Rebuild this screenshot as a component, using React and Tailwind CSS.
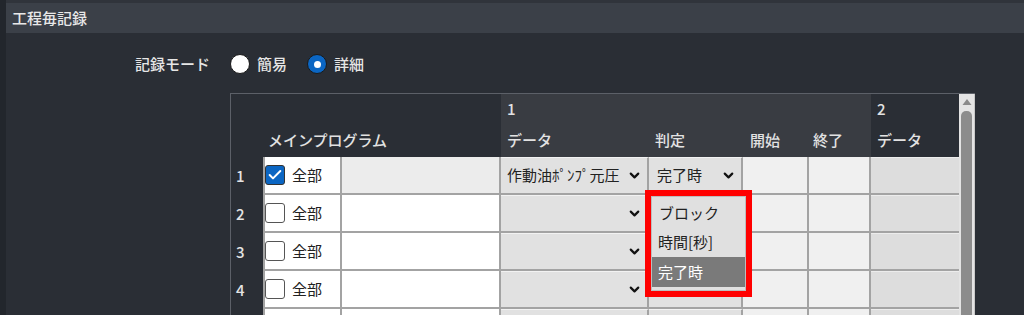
import React from 'react';
import { ChevronDown, Check } from 'lucide-react';

const font = { fontFamily: '"Noto Sans CJK JP", "Noto Sans", sans-serif' };

const Radio = ({ checked, label }) => (
  <div className="flex items-center gap-[7px]">
    {checked ? (
      <span className="w-[20px] h-[20px] rounded-full bg-[#0b66c3] border border-[#1a1a1a] flex items-center justify-center">
        <span className="w-[7px] h-[7px] rounded-full bg-white"></span>
      </span>
    ) : (
      <span className="w-[20px] h-[20px] rounded-full bg-white border border-[#1a1a1a]"></span>
    )}
    <span>{label}</span>
  </div>
);

const Box = ({ checked }) =>
  checked ? (
    <span className="w-[20px] h-[20px] rounded-[3px] bg-[#0b66c3] border border-[#333] flex items-center justify-center">
      <Check size={16} strokeWidth={3} className="text-white" />
    </span>
  ) : (
    <span className="w-[20px] h-[20px] rounded-[3px] bg-white border border-[#555]"></span>
  );

const Row = ({ n, first, blank }) => (
  <div className="flex h-[38px] shrink-0">
    <div className="w-[32px] flex items-center pl-[5px] text-[#e4e4e4] font-medium bg-[#2a2e35]">{blank ? '' : n}</div>
    <div className="w-[79px] flex items-center gap-[7px] bg-white border-l-2 border-b-2 border-r-2 border-[#a3a3a3]">
      {!blank && <Box checked={first} />}
      {!blank && <span className="text-[#222]">全部</span>}
    </div>
    <div className={`w-[159px] border-b-2 border-r-2 border-[#a3a3a3] ${first ? 'bg-[#ececec]' : 'bg-white'}`}></div>
    <div className="w-[148px] flex items-center justify-between pl-[6px] pr-[5px] bg-[#e1e1e1] border-t border-t-[#f2f2f2] border-b-2 border-r-2 border-[#a3a3a3] text-[#222]">
      <span>{first ? '作動油ﾎﾟﾝﾌﾟ元圧' : ''}</span>
      {!blank && <ChevronDown size={15} strokeWidth={3.5} className="text-[#111]" />}
    </div>
    <div className="w-[94px] flex items-center justify-between pl-[8px] pr-[5px] bg-[#e1e1e1] border-t border-t-[#f2f2f2] border-b-2 border-r-2 border-[#a3a3a3] text-[#222]">
      <span>{first ? '完了時' : ''}</span>
      {first && <ChevronDown size={15} strokeWidth={3.5} className="text-[#111]" />}
    </div>
    <div className="w-[66px] bg-[#f0f0f0] border-b-2 border-r-2 border-[#a3a3a3]"></div>
    <div className="w-[62px] bg-[#f0f0f0] border-b-2 border-r-2 border-[#a3a3a3]"></div>
    <div className="w-[88px] bg-[#dddddd] border-t border-t-[#ececec] border-b-2 border-[#a3a3a3]"></div>
  </div>
);

export default function App() {
  return (
    <div className="w-[1024px] h-[315px] overflow-hidden flex bg-[#2a2e35] text-[15px]" style={font}>
      <div className="w-[6px] shrink-0 bg-[#22262c]"></div>
      <div className="flex-1 flex flex-col">
        <div className="h-[33px] shrink-0 flex items-center px-[6px] bg-[#3b4048] text-[15px] font-medium text-[#e8e8e8] border-t-[3px] border-[#30343b]">
          工程毎記録
        </div>

        <div className="flex items-center h-[22px] shrink-0 mt-[20px] pl-[129px] text-[#e6e6e6] font-medium">
          <span className="mr-[20px]">記録モード</span>
          <div className="flex items-center gap-[20px]">
            <Radio label="簡易" />
            <Radio checked label="詳細" />
          </div>
        </div>

        <div className="relative shrink-0 ml-[224px] mt-[18px] flex w-[745px] border-t border-l border-[#5c6068]">
          <div className="flex flex-col w-[728px]">
            {/* header */}
            <div className="flex h-[63px] shrink-0 text-[#e2e2e2] font-medium">
              <div className="w-[270px] flex flex-col bg-[#2a2e35]">
                <div className="h-[30px]"></div>
                <div className="h-[33px] flex items-center pl-[37px]">メインプログラム</div>
              </div>
              <div className="w-[370px] flex flex-col bg-[#393c42]">
                <div className="h-[30px] flex items-center pl-[6px]">1</div>
                <div className="h-[33px] flex items-center">
                  <span className="w-[148px] pl-[6px]">データ</span>
                  <span className="w-[94px] pl-[6px]">判定</span>
                  <span className="w-[66px] pl-[7px]">開始</span>
                  <span className="w-[62px] pl-[4px]">終了</span>
                </div>
              </div>
              <div className="w-[88px] flex flex-col bg-[#2a2e35]">
                <div className="h-[30px] flex items-center pl-[6px]">2</div>
                <div className="h-[33px] flex items-center pl-[6px]">データ</div>
              </div>
            </div>
            <Row n="1" first />
            <Row n="2" />
            <Row n="3" />
            <Row n="4" />
            <Row n="5" blank />
          </div>

          {/* scrollbar */}
          <div className="w-[17px] flex flex-col items-center bg-[#e4e4e4] border-r border-[#c8c8c8]">
            <svg width="10" height="8" viewBox="0 0 10 8" className="mt-[4px]">
              <path d="M5 1 L9.5 7 L0.5 7 Z" fill="#8a8a8a" />
            </svg>
            <div className="mt-[5px] w-[11px] flex-1 rounded-t-[5px] bg-[#8c8c8c]"></div>
          </div>

          {/* dropdown list with highlight */}
          <div className="absolute left-[414px] top-[96px] w-[107px] h-[107px] border-[6px] border-[#ff0000]">
            <div className="h-full bg-[#e0e0e0] border border-[#bdbdbd] text-[#222] pt-[1px]">
              <div className="h-[30px] flex items-center pl-[7px]">ブロック</div>
              <div className="h-[29px] flex items-center pl-[6px]">時間[秒]</div>
              <div className="h-[30px] flex items-center pl-[6px] bg-[#7a7a7a] text-white">完了時</div>
            </div>
          </div>
        </div>
      </div>
    </div>
  );
}
